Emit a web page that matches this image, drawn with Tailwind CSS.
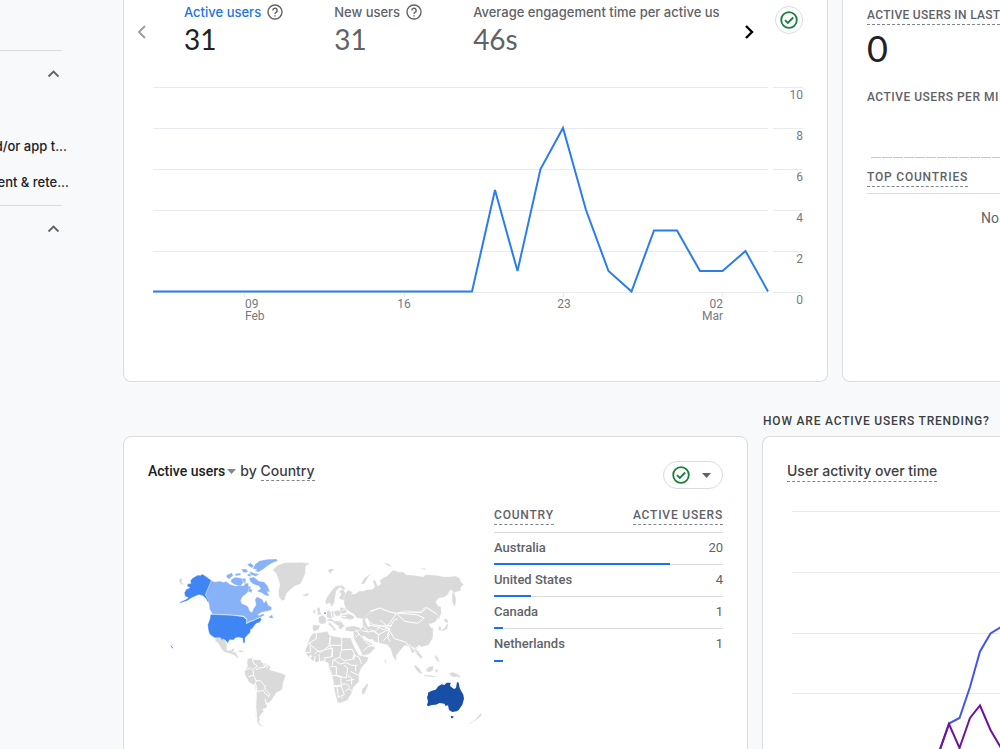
<!DOCTYPE html>
<html lang="en">
<head>
<meta charset="utf-8">
<title>Analytics home</title>
<script src="https://cdn.jsdelivr.net/npm/@tailwindcss/browser@4"></script>
</head>
<body class="h-screen overflow-hidden bg-[#f8f9fb] font-['Roboto',sans-serif] text-sm text-[#5f6368]">
<div class="flex">
  <nav class="w-[123px] shrink-0 pt-[50px] font-['Inter',sans-serif] text-[13px] font-medium text-[#202124]" aria-label="Reports">
    <div class="mr-[61px] border-t border-[#dadce0]"></div>
    <div class="mr-[61px] flex justify-end pt-[15px]">
      <button type="button" aria-label="Collapse section" class="block"><svg class="block h-4 w-[17px]" viewBox="0 0 17 16" fill="none" stroke="#5f6368" stroke-width="1.8"><path d="M3.5 10.5 8.5 5.5 13.5 10.5"/></svg></button>
    </div>
    <div class="mr-[54px] flex flex-col gap-4 overflow-hidden whitespace-nowrap pt-[54px]">
      <a href="#" class="flex h-5 items-center justify-end pr-0.5">d/or app t...</a>
      <a href="#" class="flex h-5 items-center justify-end">ent &amp; rete...</a>
    </div>
    <div class="mr-[61px] mt-[13px] border-t border-[#dadce0]"></div>
    <div class="mr-[61px] flex justify-end pt-[15px]">
      <button type="button" aria-label="Collapse section" class="block"><svg class="block h-4 w-[17px]" viewBox="0 0 17 16" fill="none" stroke="#5f6368" stroke-width="1.8"><path d="M3.5 10.5 8.5 5.5 13.5 10.5"/></svg></button>
    </div>
  </nav>

  <main class="min-w-0 flex-1">
    <div class="grid grid-cols-[705fr_158fr] gap-x-[14px]">
      <section class="min-w-0 rounded-b-lg border border-t-0 border-[#dadce0] bg-white pb-[51px]">
        <div class="flex h-20 pl-2 pr-6">
          <button type="button" aria-label="Previous metrics" class="flex h-16 w-[18px] items-center justify-center"><svg class="h-4 w-3" viewBox="0 0 12 16" fill="none" stroke="#9aa0a6" stroke-width="2"><path d="M10 2 4 8l6 6"/></svg></button>
          <div class="ml-[34px] flex min-w-0 flex-1 gap-[51px] overflow-hidden whitespace-nowrap pt-0.5 font-['Inter',sans-serif] text-[13px] font-medium">
            <div>
              <div class="flex h-5 items-center gap-1.5 text-[#1a73e8]">Active users
                <svg class="h-4 w-4" viewBox="0 0 16 16" fill="none" stroke="#5f6368" stroke-width="1.4"><circle cx="8" cy="8" r="7"/><path d="M5.8 6.4a2.2 2.2 0 1 1 3.2 2C8.300 8.800 8 9.200 8 10M8 11.200v1.400"/></svg></div>
              <div class="font-['Lato',sans-serif] text-[28px] font-normal leading-[34px] text-[#202124]">31</div>
            </div>
            <div>
              <div class="flex h-5 items-center gap-1.5">New users
                <svg class="h-4 w-4" viewBox="0 0 16 16" fill="none" stroke="#5f6368" stroke-width="1.4"><circle cx="8" cy="8" r="7"/><path d="M5.8 6.4a2.2 2.2 0 1 1 3.2 2C8.300 8.800 8 9.200 8 10M8 11.200v1.400"/></svg></div>
              <div class="font-['Lato',sans-serif] text-[28px] font-normal leading-[34px]">31</div>
            </div>
            <div class="min-w-0 flex-1">
              <div class="h-5 overflow-hidden leading-5">Average engagement time per active us</div>
              <div class="font-['Lato',sans-serif] text-[28px] font-normal leading-[34px]">46s</div>
            </div>
          </div>
          <button type="button" aria-label="Next metrics" class="ml-2 flex h-16 w-5 items-center justify-center"><svg class="h-4 w-3" viewBox="0 0 12 16" fill="none" stroke="#000" stroke-width="2.400"><path d="M3 2l6 6-6 6"/></svg></button>
          <button type="button" aria-label="Data quality" class="ml-4 mt-1.5 flex h-7 w-7 shrink-0 items-center justify-center rounded-full border border-[#dadce0]"><svg class="h-[18px] w-[18px] shrink-0" viewBox="0 0 18 18" fill="none" stroke="#188038" stroke-width="1.8"><circle cx="9" cy="9" r="7.800"/><path d="m5 9.200 2.800 2.800L13.200 6.500"/></svg></button>
        </div>
        <svg class="block w-full" viewBox="124 80 703 250" role="img" aria-label="Active users by day">
          <g stroke="#e8eaed" shape-rendering="crispEdges">
            <path d="M153 87.500H768M773 87.500H803M153 128.500H768M773 128.500H803M153 169.500H768M773 169.500H803M153 210.500H768M773 210.500H803M153 251.500H768M773 251.500H803M153 292.500H768M773 292.500H803M244.500 292v5M404.500 292v5M563.500 292v5M722.500 292v5"/>
          </g>
          <polyline fill="none" stroke="#2b7de9" stroke-width="2" points="153,291.500 472,291.500 495,190 517.500,271 540.500,169 563,128 586,210 608.500,271 631.500,291.500 654,230.500 677,230.500 700,271 722.500,271 745.500,251 768,291.500"/>
          <g class="text-xs" fill="#757a80">
            <text x="803" y="99" text-anchor="end">10</text>
            <text x="803" y="140" text-anchor="end">8</text>
            <text x="803" y="181" text-anchor="end">6</text>
            <text x="803" y="222" text-anchor="end">4</text>
            <text x="803" y="263" text-anchor="end">2</text>
            <text x="803" y="304" text-anchor="end">0</text>
            <text x="245" y="308">09</text><text x="245" y="320">Feb</text>
            <text x="404" y="308" text-anchor="middle">16</text>
            <text x="564" y="308" text-anchor="middle">23</text>
            <text x="723" y="308" text-anchor="end">02</text><text x="723" y="320" text-anchor="end">Mar</text>
          </g>
        </svg>
      </section>

      <section class="min-w-0 overflow-hidden whitespace-nowrap rounded-bl-lg border-b border-l border-[#dadce0] bg-white pl-6 pt-[7px]">
        <h2 class="flex"><span class="border-b border-dashed border-[#80868b] text-xs font-medium leading-[17px] tracking-wide">ACTIVE USERS IN LAST</span></h2>
        <div class="mt-[3px] font-['Lato',sans-serif] text-[36px] leading-10 text-[#202124]">0</div>
        <h3 class="mt-[21px] text-xs font-medium leading-4 tracking-[0.5px]">ACTIVE USERS PER MI</h3>
        <div class="ml-1 mt-[52px] h-px bg-[repeating-linear-gradient(90deg,#c4c7c9_0_10px,transparent_10px_11px)]"></div>
        <div class="border-b border-[#dadce0] pb-1.5 pt-[11px]">
          <div class="flex"><span class="border-b border-dashed border-[#80868b] text-xs font-medium leading-[17px] tracking-[0.8px]">TOP COUNTRIES</span></div>
        </div>
        <p class="pl-[114px] pt-3.5 leading-5">No</p>
      </section>
    </div>

    <div class="grid grid-cols-[625fr_238fr] gap-x-[14px]">
      <h2 class="col-start-2 whitespace-nowrap pb-2 pl-px pt-8 text-xs font-medium leading-[14px] tracking-[0.8px] text-[#3c4043]">HOW ARE ACTIVE USERS TRENDING?</h2>
      <section class="col-start-1 min-w-0 rounded-lg border border-[#dadce0] bg-white px-6 pb-10 pt-6">
        <div class="flex items-start justify-between">
          <h3 class="flex items-center leading-5 text-[#3c4043]">
            <button type="button" class="flex items-center font-medium text-[#202124]">Active users<svg class="ml-0.5 h-[5px] w-[9px]" viewBox="0 0 9 5" fill="#80868b"><path d="M0 0h9L4.500 5z"/></svg></button>
            <span class="ml-1 font-['Inter',sans-serif] font-medium">by <a href="#" class="inline-block border-b border-dashed border-[#80868b] leading-[18px]">Country</a></span>
          </h3>
          <button type="button" aria-label="Data quality options" class="flex h-7 w-[60px] items-center gap-3 rounded-full border border-[#dadce0] pl-2"><svg class="h-[18px] w-[18px]" viewBox="0 0 18 18" fill="none" stroke="#188038" stroke-width="1.8"><circle cx="9" cy="9" r="7.800"/><path d="m5 9.200 2.800 2.800L13.200 6.500"/></svg><svg class="h-[5px] w-[9px]" viewBox="0 0 9 5" fill="#5f6368"><path d="M0 0h9L4.500 5z"/></svg></button>
        </div>
        <div class="mt-4 grid grid-cols-[341fr_229fr] gap-x-[5px]">
          <svg class="mt-[45px] block w-full" viewBox="-51 0 1023 570" role="img" aria-label="World map of active users by country">
            <g fill="#dadada" stroke="#fff" stroke-width="1" stroke-linejoin="round">
              <path d="M42 92l4-8 6 4-2 8 5 6-7 3zM150 260l22 5 7 3 5 11 2 8-1 12 3 3 10-2 6-5 4 3-3 8 9 1 2 9 6 8-6-1-8-7-16-6-14-4-9-9-4-9-9-12-4 1zM200 304l10 2 4 8M216 302l14-1 10 5-14 1z"/>
              <path d="M248 326l12-2 8 5 18 1 5 8 15 3 11 10-4 8 12 4 20 5 17 7-2 10-6 12-2 21-9 6-9 4-8 12-6 10-7 7-10 2 4 10-5 6-9 2 3 8-7 6-6 10 2 8-4 8 6 7 9 3-10 1-8-8-6-20 1-74-3-18-18-11-12-22-1-12 9-14-2-12z"/>
              <path d="M323 60l14-14 23-8 45-1 30 3-13 8-1 22-8 19-6 12-19 8-14 12-10 10-5 19-8 2-9-10-2-20 5-16-5-20-7-16zM413 134l8-2 8-3 4 4-9 6-9-1zM488 60l8-4 14 1-8 6-6 8-5-5z"/>
              <path d="M443 250l18-2 27-4 5 12 20 4 18 3 26 1 6 15 9 20 10 17 29 6-4 12-16 17-10 22 1 22-17 16-6 20-12 20-24 9-6-4-9-36-2-22-8-32-6-14-2-12-16-8-20 5-16-8-16-18-2-11 8-20 7-18z"/>
              <path d="M607 400l3 4-11 27-7 3-2-8 2-10 8-8zM443 224l22 2-4 13-12 5-6-4zM461 201l12-6 10 9v16l-14 3-8-6zM459 171l5 2 2 11 4 9-13 3 2-10-4-6zM445 180l6-1 1 9-8 3z"/>
              <path d="M485 186l6-6 4 5 10-2 2 18-10 5-12-4zM506 184l16-3 6 4-2 12-14 2zM486 208l14-2 8 8 10-2 8-2 6 8 7-2 3 8-8 8-6 6-6-2-2-8-14-10-8-5-12 1zM490 217l7 2 12 14 5 6-7 4-5-10-12-9zM527 196l24-5 17 8-2 7-12 4-12-2-14-5zM524 172l18 3 4 13-18 4z"/>
              <path d="M481 152l6-12 14-20 12-12 17-2 12 8-6 6-12-8-10 10-4 22-2 14-8 14-7-14-10 6zM521 126l12-10 8 12 4 14-8 9-14 1-2-10 5-8zM541 232l24-5 22 7-4 9-20 2-22-3z"/>
              <path d="M537 136L549 120 563 126 558 133 572 131 582 123 592 124 605 119 623 118 629 110 623 92 630 90 638 108 648 102 644 92 657 82 667 78 676 68 685 60 700 66 715 66 723 74 745 76 775 80 782 74 815 76 835 80 855 80 870 78 884 84 888 96 897 104 887 112 888 122 873 126 868 128 873 146 872 162 867 170 861 154 861 134 865 124 855 120 848 134 838 142 822 144 812 156 818 166 828 172 829 190 821 208 809 200 780 172 765 186 715 184 695 190 675 186 645 174 622 182 626 196 612 206 596 210 590 206 576 204 566 192 552 184 544 178 537 162z"/>
              <path d="M565 245l20-4 9-13-2-16 6-12 24-16 24-10 30 12 20 4 20-8 50 4 15-14 40 24-8 18-20 10 12 13-2 28-12 20-22 6-8-6-6 14 18 22-6 5-18-20-8 4-8-20-14-4-12 14-12 16-2 18-10-16-6-22-10-12-12-2-26-6-8-9-8 6 12 13 6 8-18 18-20 5-12-26-14-24z"/>
              <path d="M837 206l10 2 4 8-5 3-8-5zM846 220l4 4-4 14-12 5-6-2 12-8zM821 228l8 4-2 12-6-4zM750 344l14 12 9 16-8-1-12-12-6-12zM784 356l10-6 12-3-2 14-10 6-10-3zM776 374l22 2 20 4-14 2-26-4zM812 356l8 3-3 10-6-4zM861 366l18 6 10 12-14-4-10 2-14-10zM810 314l8 8 6 14-6-1-8-12zM911 522l18-12 18-20 4 4-14 14-22 14zM588 102l8-16 24-18-12 16-10 18zM655 40l14 0 14 10-12-2zM765 54l22 2-10 4zM661 328l3 7-2 4-4-6z"/>
            </g>
            <g fill="#fff" stroke="#fff" stroke-width="1">
              <path d="M529 214l12-8 18 4 10 8-16 10-18-4zM600 208l8-4 3 12 6 12-8 2-6-12zM518 138l8-12 2 8-8 12 14 4-2 8-14 2zM616 279l-18-12-6-9 6 0 10 8 14 5z"/>
            </g>
            <g fill="none" stroke="#fff" stroke-width="3" stroke-linejoin="round">
              <path d="M262 326l4 14 12 8-14 10 2 18-16 4M242 360l14-6 8 8M272 360l10-6 18-2 4-10M296 336l2 16M306 342l1 12M266 376l8 18-8 14M272 392l14 0 14 16 0 10 14 14-4 10M272 402l4 22 20-2 4 8 12 10M274 420l-2 50 4 42M300 446l4 18"/>
              <path d="M454 250l0 16-26 16-10 22M438 286l28 22 26-20 4-28M435 276l2 30-22 4M448 312l10-8 18-2M496 260l-2 26 36 0 0-24M530 286l0 14 32-2 8 20M494 288l8 10-2 22M530 298l-6 24-20 8-2 16M478 300l24-6 0 26-26 4M480 326l-2 16M462 312l2 26M450 318l-2 20M436 314l2 24M422 324l20-6M524 322l14 10 24-4 6-16M566 330l4-14 12 6 8 20M506 330l20 12 18-4 16 8 18 0M496 350l18 0 0 26-14 2M538 346l10 8-4 30-14-4-16-4M516 378l12 4 0 24-26 2M528 402l16 0 12 10M548 376l12 8 0 20M556 364l24 12M572 346l0 18M528 408l10 26-20 8M516 410l4 34M540 424l12-8 10 8M544 392l24-4M504 410l28-2M533 440l-4 6"/>
              <path d="M572 262l10-10-10-14M582 252l24 28 20 10M590 242l20 4 20-4 10 14 0 24M594 304l14-14 16-4M594 262l14 12 26 6M610 246l-14-18M602 206l22 18 30 4 24-2 10-16 10-4M635 242l10-16 30 10-8 20 8 20M615 226l20 4 24 10 8-10M645 210l26 22 10-6M616 238l24 16 20-10 14-6M614 184l30-10 30 12 20 4-20 30-12 10 14 16 12 20 34 10 10 14M694 190l26 24 38 6 20-16-24-10-52-4M694 190l30-4 46 2 15-16 30 20M732 282l10 10 14 6 14-2M740 292l16 18M752 290l18 18M793 220l6 14M655 272l20-20M532 182l10-6M522 198l22 2M498 184l4 22M511 210l16 4"/>
            </g>
            <g fill="#87b2f7" stroke="#fff" stroke-width="1" stroke-linejoin="round">
              <path d="M138 91l12 5 14-3 12 4 7-3 12 9 17 5 12-4 11 4 7-9 8 1 1 9 8 2-5 10-12 12-10 8-5 11 4 9 11 4 8 6 4 12 7 4 5-12 7-10-3-16 6-9 10 5 7 4 4 10 6-9 7 16 10 6 0 8-14 4-16 3-12 7 5 2 12-5 4 5-12 6-7 2L268 210 255 214 245 220 246 208 236 198 200 195 142 192 134 178 132 162 126 146 121 134z"/>
              <path d="M184 76l16-8 5 8-12 11-8-4zM199 88l12-6 18 2 8 10-10 14-18-4-12-8zM208 72l18-3 2 6-14 3zM231 84l12 2-2 16-8-8zM228 57l16 0 6 9-14 2zM246 74l10-5 2 10-9 0zM252 84l14-3 16 12 16 3 10 12 7 18-9-1 8 12-11 0-14-9-14-4 12-8-6-8-16-5-10-9zM250 116l12 2-2 10-10-3zM263 56l8-14 13-10 24-4 26-1 5 5-19 8-13 8-12 10-14 8-12-2 7-5zM246 44l10-6 11 10-7 6zM254 64l16 6 14 3-12 6-16-5zM311 201l10-7 4 10-9 1z"/>
            </g>
            <g fill="#3f85f4" stroke="#fff" stroke-width="1" stroke-linejoin="round">
              <path d="M139 91l-18 43 10 18-1 6-8-13-9-8-11-3-10 4-13 6-12 8-23 8 1-4 16-7 9-6-10-4-2-11 6-10 11-5-8-4 0-7 11-2-2-8 6-7 15-9 11 0 4-4 10 7z"/>
              <path d="M137 193L200 196 235 200 245 209 244 221 256 215 268 211 277 206 286 203 290 209 282 218 274 220 268 227 262 236 257 238 256 247 246 257 240 264 240 276 237 281 234 276 233 265 221 262 211 264 206 270 194 269 190 276 189 281 184 274 176 267 170 270 166 263 148 263 134 253 130 241 128 224 134 209zM15 286l5 1 4 6-2 3-3-4z"/>
            </g>
            <path fill="#3f85f4" d="M478 187h4v5h-4z"/>
            <path fill="#174ea6" d="M789 434L789 428 800 422 812 419 820 409 830 403 838 405 845 398 857 398 855 408 867 417 873 414 876 396 881 398 884 414 889 424 895 434 897 446 892 464 881 480 875 484 862 486 852 480 849 466 842 468 838 461 824 459 812 464 800 465 790 469 786 466 789 454 786 442zM858 498l8 1-3 6-5-1z"/>
          </svg>
          <table class="w-full self-start border-collapse">
            <thead>
              <tr class="border-b border-[#dadce0] text-xs font-medium">
                <th scope="col" class="h-[27px] pb-[7px] text-left align-bottom font-medium"><span class="inline-block border-b border-dashed border-[#80868b] leading-[18px] tracking-[0.8px]">COUNTRY</span></th>
                <th scope="col" class="h-[27px] pb-[7px] text-right align-bottom font-medium"><span class="inline-block border-b border-dashed border-[#80868b] leading-[18px] tracking-[0.8px]">ACTIVE USERS</span></th>
              </tr>
            </thead>
            <tbody class="text-[13px]">
              <tr class="relative h-8 border-b border-[#dadce0]"><td class="font-medium">Australia<div class="absolute -bottom-0.5 left-0 h-0.5 bg-[#1a73e8]" style="width:77%"></div></td><td class="text-right">20</td></tr>
              <tr class="relative h-8 border-b border-[#dadce0]"><td class="font-medium">United States<div class="absolute -bottom-0.5 left-0 h-0.5 bg-[#1a73e8]" style="width:16%"></div></td><td class="text-right">4</td></tr>
              <tr class="relative h-8 border-b border-[#dadce0]"><td class="font-medium">Canada<div class="absolute -bottom-0.5 left-0 h-0.5 bg-[#1a73e8]" style="width:4%"></div></td><td class="text-right">1</td></tr>
              <tr class="relative h-8"><td class="font-medium">Netherlands<div class="absolute -bottom-0.5 left-0 h-0.5 bg-[#1a73e8]" style="width:4%"></div></td><td class="text-right">1</td></tr>
            </tbody>
          </table>
        </div>
      </section>

      <section class="min-w-0 overflow-hidden whitespace-nowrap rounded-tl-lg border-l border-t border-[#dadce0] bg-white pl-6 pt-6">
        <h3 class="flex"><span class="border-b border-dashed border-[#80868b] font-['Inter',sans-serif] font-medium leading-5 text-[#3c4043]">User activity over time</span></h3>
        <svg class="mt-2 block w-full" viewBox="787 490 213 290" role="img" aria-label="User activity over time">
          <path stroke="#e8eaed" shape-rendering="crispEdges" d="M792 511.500h208M792 572.500h208M792 633.500h208M792 693.500h208"/>
          <polyline fill="none" stroke="#4255ee" stroke-width="2" points="930,780 941,747 949,723.500 959.500,718 970,687 980,651.500 990.500,633.500 1001,627"/>
          <polyline fill="none" stroke="#71129b" stroke-width="2" points="928,780 940,749 949,724 959.500,748 970,718 980,705.500 990.500,730 1001,748"/>
        </svg>
      </section>
    </div>
  </main>
</div>
</body>
</html>
